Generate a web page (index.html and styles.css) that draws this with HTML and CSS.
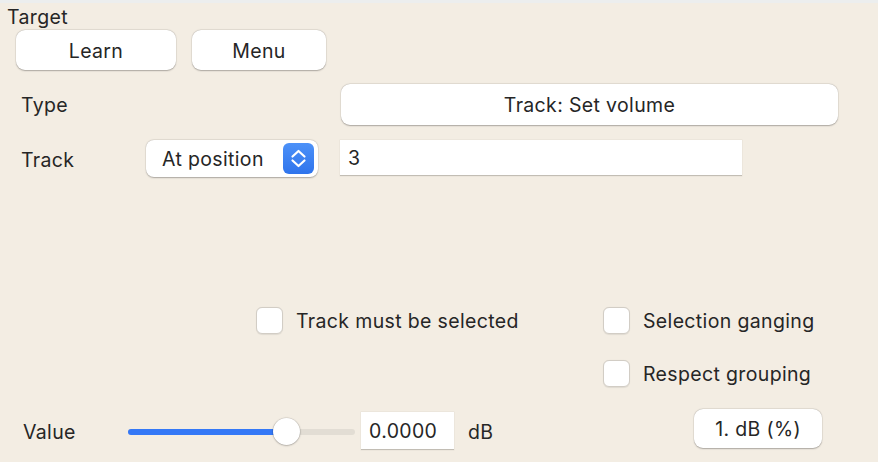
FILE: index.html
```html
<!DOCTYPE html>
<html>
<head>
<meta charset="utf-8">
<link rel="stylesheet" href="styles.css">
</head>
<body>
<div class="topbar"></div>
<div class="panel">
  <div class="title">Target</div>
  <div class="btnrow">
    <div class="btn learn">Learn</div>
    <div class="btn menu">Menu</div>
  </div>
  <div class="form">
    <div class="label">Type</div>
    <div class="btn typebtn">Track: Set volume</div>
    <div class="label tracklabel">Track</div>
    <div class="popup">
      <span>At position</span>
      <span class="stepper">
        <svg width="31" height="31" viewBox="0 0 31 31"><path d="M9.5 13.5 L15.5 8 L21.5 13.5 M9.5 17.5 L15.5 23 L21.5 17.5" fill="none" stroke="#fff" stroke-width="2.2" stroke-linecap="round" stroke-linejoin="round"/></svg>
      </span>
    </div>
    <div class="field trackfield">3</div>
  </div>
  <div class="checkrow first">
    <div class="check c1"><span class="box"></span><span>Track must be selected</span></div>
    <div class="check c2"><span class="box"></span><span>Selection ganging</span></div>
  </div>
  <div class="checkrow second">
    <div class="check c3"><span class="box"></span><span>Respect grouping</span></div>
  </div>
  <div class="valuerow">
    <div class="vlabel">Value</div>
    <div class="slider">
      <div class="track"><div class="fill" style="width:158px"></div></div>
      <div class="knob" style="left:145px"></div>
    </div>
    <div class="field valfield">0.0000</div>
    <div class="unit">dB</div>
    <div class="btn dbbtn">1. dB (%)</div>
  </div>
</div>
</body>
</html>
```
FILE: styles.css
```css
html, body {
  margin: 0;
  padding: 0;
}
body {
  width: 878px;
  height: 462px;
  overflow: hidden;
  background: #f3ede3;
  font-family: "Inter", "Liberation Sans", sans-serif;
  font-size: 19.5px;
  letter-spacing: 0.35px;
  color: #262626;
}
.topbar {
  height: 3px;
  background: #eceeee;
}
.title {
  padding: 4px 0 0 7px;
  line-height: 20px;
  height: 20px;
}
.btnrow {
  display: flex;
  gap: 16px;
  margin: 3px 0 0 16px;
}
.btn {
  background: #fff;
  border-radius: 9px;
  box-shadow: 0 0.5px 1.5px rgba(0,0,0,0.28), 0 0 0 0.5px rgba(0,0,0,0.06);
  display: flex;
  align-items: center;
  justify-content: center;
  box-sizing: border-box;
}
.learn { width: 160px; height: 40px; padding-top: 1px; }
.menu { width: 134px; height: 40px; padding-top: 1px; }
.form {
  display: grid;
  grid-template-columns: 125px 194px 402px;
  grid-template-rows: 41px 36px;
  row-gap: 15px;
  margin: 14px 0 0 21px;
  align-items: center;
}
.label { line-height: 24px; }
.tracklabel { padding-top: 3px; }
.typebtn {
  grid-column: 3;
  width: 497px;
  height: 41px;
  margin-left: 1px;
}
.popup {
  width: 172px;
  height: 37px;
  box-sizing: border-box;
  background: #fff;
  border-radius: 8px;
  box-shadow: 0 0.5px 1.5px rgba(0,0,0,0.28), 0 0 0 0.5px rgba(0,0,0,0.06);
  display: flex;
  align-items: center;
  justify-content: space-between;
  padding: 0 4px 0 16px;
  align-self: start;
}
.stepper {
  width: 31px;
  height: 31px;
  border-radius: 6px;
  background: linear-gradient(#4c91f8, #2f74ec);
  display: flex;
}
.field {
  background: #fff;
  box-sizing: border-box;
  border-bottom: 1.5px solid #c2bdb4;
  box-shadow: 0 0 0 0.5px rgba(0,0,0,0.06);
  display: flex;
  align-items: center;
}
.trackfield {
  width: 402px;
  height: 36px;
  padding-left: 8px;
  align-self: start;
}
.checkrow {
  display: flex;
}
.checkrow.first { margin-top: 131px; }
.checkrow.second { margin-top: 26px; }
.check {
  display: flex;
  align-items: center;
  gap: 13px;
  height: 27px;
}
.c1 { margin-left: 256px; width: 347px; }
.c3 { margin-left: 603px; }
.box {
  width: 27px;
  height: 27px;
  box-sizing: border-box;
  background: #fff;
  border: 1px solid #d2cdc5;
  border-radius: 6px;
  box-shadow: 0 0.5px 1px rgba(0,0,0,0.08);
}
.valuerow {
  display: flex;
  align-items: flex-start;
  margin-top: 22px;
}
.vlabel {
  margin: 10px 0 0 23px;
  width: 105px;
  line-height: 26px;
}
.slider {
  position: relative;
  width: 227px;
  height: 27px;
  margin-top: 9px;
  display: flex;
  align-items: center;
}
.track {
  width: 100%;
  height: 6px;
  border-radius: 3px;
  background: #e2ddd4;
  overflow: hidden;
}
.fill {
  height: 100%;
  background: #3478f6;
}
.knob {
  position: absolute;
  top: 0;
  width: 27px;
  height: 27px;
  border-radius: 50%;
  background: #fff;
  box-shadow: 0 0.5px 2px rgba(0,0,0,0.35), 0 0 0 0.5px rgba(0,0,0,0.08);
}
.valfield {
  width: 93px;
  height: 38px;
  margin: 3px 0 0 6px;
  padding-left: 8px;
}
.unit {
  margin: 10px 0 0 14px;
  line-height: 26px;
  width: 226px;
}
.dbbtn {
  width: 128px;
  height: 39px;
}
```
